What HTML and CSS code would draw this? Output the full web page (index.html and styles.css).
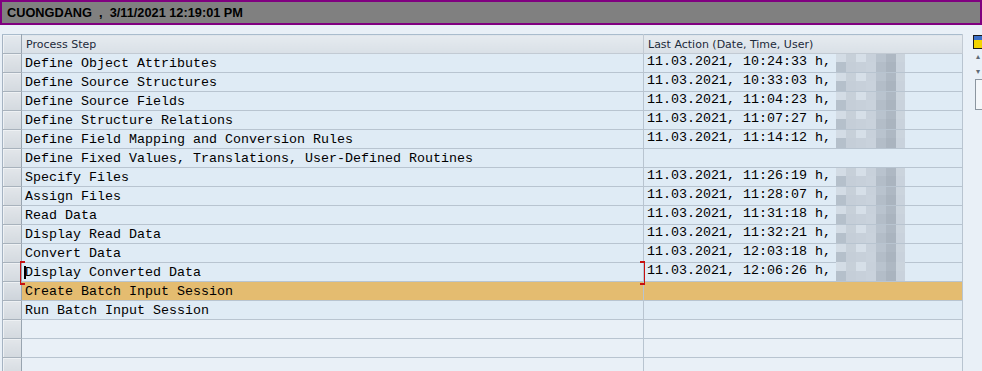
FILE: index.html
```html
<!DOCTYPE html>
<html lang="en">
<head>
    <meta charset="UTF-8">
    <title>Process Steps</title>
    <link rel="stylesheet" href="styles.css">
</head>
<body>
    <div class="titlebar">CUONGDANG &nbsp;, &nbsp;3/11/2021 12:19:01 PM</div>

    <div class="main">
        <table class="steps">
            <colgroup>
                <col class="c-sel">
                <col class="c-step">
                <col class="c-last">
            </colgroup>
            <thead>
                <tr>
                    <th class="sel"></th>
                    <th>Process Step</th>
                    <th>Last Action (Date, Time, User)</th>
                </tr>
            </thead>
            <tbody>
                <tr><td class="sel"></td><td>Define Object Attributes</td><td>11.03.2021, 10:24:33 h, <span class="blur"></span></td></tr>
                <tr><td class="sel"></td><td>Define Source Structures</td><td>11.03.2021, 10:33:03 h, <span class="blur"></span></td></tr>
                <tr><td class="sel"></td><td>Define Source Fields</td><td>11.03.2021, 11:04:23 h, <span class="blur"></span></td></tr>
                <tr><td class="sel"></td><td>Define Structure Relations</td><td>11.03.2021, 11:07:27 h, <span class="blur"></span></td></tr>
                <tr><td class="sel"></td><td>Define Field Mapping and Conversion Rules</td><td>11.03.2021, 11:14:12 h, <span class="blur"></span></td></tr>
                <tr><td class="sel"></td><td>Define Fixed Values, Translations, User-Defined Routines</td><td></td></tr>
                <tr><td class="sel"></td><td>Specify Files</td><td>11.03.2021, 11:26:19 h, <span class="blur"></span></td></tr>
                <tr><td class="sel"></td><td>Assign Files</td><td>11.03.2021, 11:28:07 h, <span class="blur"></span></td></tr>
                <tr><td class="sel"></td><td>Read Data</td><td>11.03.2021, 11:31:18 h, <span class="blur"></span></td></tr>
                <tr><td class="sel"></td><td>Display Read Data</td><td>11.03.2021, 11:32:21 h, <span class="blur"></span></td></tr>
                <tr><td class="sel"></td><td>Convert Data</td><td>11.03.2021, 12:03:18 h, <span class="blur"></span></td></tr>
                <tr class="focus"><td class="sel"></td><td class="focus-l"><span class="caret"></span>Display Converted Data</td><td class="focus-r">11.03.2021, 12:06:26 h, <span class="blur"></span></td></tr>
                <tr class="current"><td class="sel"></td><td>Create Batch Input Session</td><td></td></tr>
                <tr><td class="sel"></td><td>Run Batch Input Session</td><td></td></tr>
                <tr class="empty"><td class="sel"></td><td></td><td></td></tr>
                <tr class="empty"><td class="sel"></td><td></td><td></td></tr>
                <tr class="empty"><td class="sel"></td><td></td><td></td></tr>
            </tbody>
        </table>

        <div class="side">
            <span class="cfg-icon"></span>
            <span class="arrow">&#9652;</span>
            <span class="arrow">&#9662;</span>
            <span class="track"></span>
        </div>
    </div>
</body>
</html>
```

FILE: styles.css
```css
body {
    margin: 0;
    background-color: #e9f0f7;
    font-family: 'Liberation Sans', Arial, sans-serif;
    overflow: hidden;
}

.titlebar {
    height: 21px;
    line-height: 21px;
    background-color: #808080;
    border: 2px solid #800080;
    padding-left: 5px;
    font-size: 12.75px;
    font-weight: bold;
    color: #000;
}

.main {
    display: flex;
    align-items: flex-start;
    padding: 9px 0 0 2px;
}

.steps {
    border-collapse: collapse;
    table-layout: fixed;
    width: 960px;
    border-left: 1px solid #a5b3c2;
    border-top: 1px solid #a9bccd;
}

.c-sel { width: 19px; }
.c-step { width: 622px; }
.c-last { width: 319px; }

.steps th,
.steps td {
    height: 18px;
    padding: 0 0 0 3px;
    border-right: 1px solid #b8c4d0;
    border-bottom: 1px solid #b8c4d0;
    white-space: nowrap;
    overflow: hidden;
    text-align: left;
}

.steps th {
    padding-left: 4px;
    background: linear-gradient(#e6ebf0, #d9e0e7);
    font-family: 'DejaVu Sans', Tahoma, sans-serif;
    font-weight: normal;
    font-size: 11px;
    color: #1c2a3a;
    border-right-color: #c2cad3;
    border-bottom-color: #c2cad3;
}

.steps td {
    background-color: #dfebf5;
    font-family: 'Liberation Mono', 'Courier New', monospace;
    font-size: 13.33px;
    color: #000;
    position: relative;
}

.steps .sel {
    padding: 0;
    background: linear-gradient(#e2e6ea, #d3d9df);
    border-right: 1px solid #98a4b0;
    border-bottom: 1px solid #a8b2bc;
    box-shadow: inset 1px 1px 0 #eef1f4;
}

.steps thead .sel {
    background: linear-gradient(#e4e9ee, #d6dde4);
}

.steps tr.empty td {
    background-color: #e9f0f7;
}

.steps tr.empty .sel {
    background: linear-gradient(#e2e6ea, #d3d9df);
}

.steps tr.current td {
    background-color: #e4bc70;
}

.steps tr.current .sel {
    background: linear-gradient(#dde2e7, #cdd3da);
}

.blur {
    display: inline-block;
    vertical-align: top;
    width: 69px;
    height: 19px;
    margin-left: -3px;
    margin-top: -1px;
    background:
        linear-gradient(to right,
            #d3dce5 0 10px, #c7d0d9 10px 20px, #d6dfe8 20px 30px,
            #c8d1db 30px 40px, #b9c3ce 40px 50px, #aeb8c3 50px 60px,
            #cbd4dd 60px 69px) top / 69px 9px no-repeat,
        linear-gradient(to right,
            #b5c0cb 0 10px, #c5ced8 10px 20px, #c7d0da 20px 30px,
            #c9d2dc 30px 40px, #b3bdc8 40px 50px, #aab4bf 50px 60px,
            #c9d2dc 60px 69px) bottom / 69px 10px no-repeat;
}

.steps td.focus-l,
.steps td.focus-r {
    overflow: visible;
}

.caret {
    position: absolute;
    left: 2px;
    top: 3px;
    width: 2px;
    height: 13px;
    background-color: #000;
}

.focus-l::before,
.focus-r::before {
    content: "";
    position: absolute;
    z-index: 2;
    top: -2px;
    width: 4px;
    height: 20px;
    border-top: 2px solid #c81010;
    border-bottom: 2px solid #c81010;
}

.focus-l::before {
    left: -2px;
    border-left: 1px solid #c81010;
}

.focus-r::before {
    left: -4px;
    border-right: 1px solid #c81010;
}

.side {
    display: flex;
    flex-direction: column;
    align-items: flex-end;
    flex: 1;
    padding-top: 1px;
}

.cfg-icon {
    width: 8px;
    height: 12px;
    border: 1px solid #1a1a1a;
    border-right: none;
    background: linear-gradient(#3a6fc8 0 4px, #f2d400 4px);
}

.arrow {
    font-size: 8px;
    color: #5f6a75;
    height: 15px;
    line-height: 15px;
    width: 6px;
}

.track {
    width: 6px;
    height: 29px;
    border: 1px solid #8c96a0;
    border-right: none;
    background-color: #f4f7fa;
}
```
